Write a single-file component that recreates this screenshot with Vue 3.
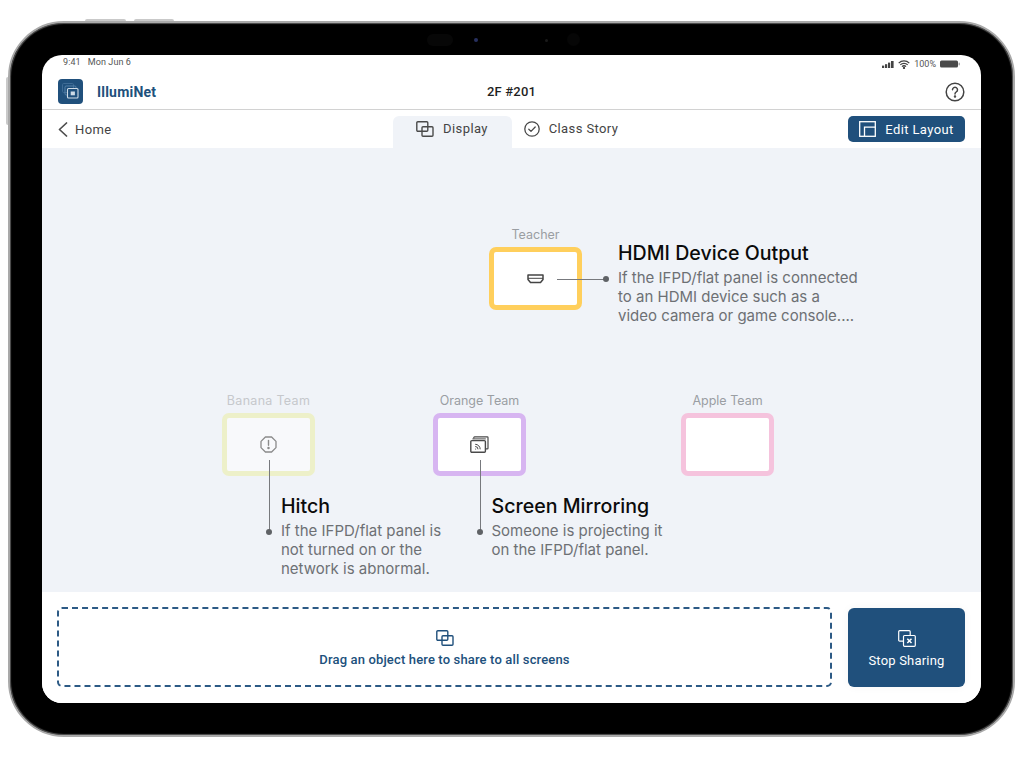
<script setup>
const tabs = [
  { id: 'display', label: 'Display', active: true },
  { id: 'story', label: 'Class Story', active: false },
]
</script>

<template>
  <div class="stage">
    <div class="device">
      <span class="hw hw-top-a"></span>
      <span class="hw hw-top-b"></span>
      <span class="hw hw-side"></span>
      <span class="cam cam-pill"></span>
      <span class="cam cam-lens"></span>
      <span class="cam cam-dot"></span>
      <span class="cam cam-round"></span>

      <div class="screen">
        <div class="status">
          <span class="status-time">9:41&nbsp;&nbsp;&nbsp;Mon Jun 6</span>
          <div class="status-right">
            <svg width="12" height="7" viewBox="0 0 12 7" fill="#444"><rect x="0" y="4.6" width="2.2" height="2.4"/><rect x="3" y="3.2" width="2.2" height="3.8"/><rect x="6" y="1.6" width="2.2" height="5.4"/><rect x="9" y="0" width="2.6" height="7"/></svg>
            <svg width="12" height="9" viewBox="0 0 12 9" fill="none" stroke="#444" stroke-width="1.3"><path d="M.7 3.1a7.6 7.6 0 0 1 10.600 0M2.300 4.900a5.300 5.300 0 0 1 7.400 0M4 6.600a2.800 2.800 0 0 1 4 0"/><circle cx="6" cy="8" r=".5" fill="#444"/></svg>
            <span class="status-pct">100%</span>
            <svg width="20" height="8" viewBox="0 0 20 8"><rect x="0" y=".5" width="18" height="7" rx="1.5" fill="#4a4a4a"/><rect x="18.6" y="2.7" width="1.2" height="2.6" fill="#9a9a9a"/></svg>
          </div>
        </div>

        <header class="topbar">
          <div class="brand">
            <div class="logo">
              <svg width="25" height="25" viewBox="0 0 25 25" fill="none">
                <rect x="4.5" y="4.5" width="11" height="9" rx="1.2" stroke="#3f6c96" stroke-width="1"/>
                <rect x="7" y="7" width="11" height="9" rx="1.2" stroke="#5580a8" stroke-width="1"/>
                <rect x="9.5" y="9.5" width="10.5" height="9.5" rx="1" fill="#20507c" stroke="#cfdbe6" stroke-width="1.1"/>
                <rect x="12.7" y="12.5" width="4.2" height="3.8" fill="#cfdbe6"/>
              </svg>
            </div>
            <span class="brand-name">IllumiNet</span>
          </div>
          <div class="room">2F #201</div>
          <div class="help">
            <svg width="20" height="20" viewBox="0 0 20 20" fill="none" stroke="#444" stroke-width="1.5"><circle cx="10" cy="10" r="8.800"/><path d="M7.500 7.700a2.500 2.500 0 1 1 3.800 2.200c-.9.500-1.300 1-1.300 2" stroke-linecap="round"/><circle cx="10" cy="14.400" r=".5" fill="#444"/></svg>
          </div>
        </header>

        <nav class="navbar">
          <div class="home">
            <svg width="10" height="15" viewBox="0 0 10 15" fill="none" stroke="#4d4d4d" stroke-width="1.7" stroke-linecap="round" stroke-linejoin="round"><path d="M8.500 1 1.500 7.500l7 6.500"/></svg>
            <span>Home</span>
          </div>
          <div class="tabs">
            <div v-for="t in tabs" :key="t.id" class="tab" :class="{ active: t.active }">
              <svg v-if="t.id === 'display'" width="18" height="16" viewBox="0 0 18 16" fill="none" stroke="#4a4a4a" stroke-width="1.4" stroke-linejoin="round"><rect x=".8" y=".8" width="11" height="9.400" rx="1"/><rect x="6" y="5.800" width="11" height="9.400" rx="1"/></svg>
              <svg v-else width="16" height="16" viewBox="0 0 16 16" fill="none" stroke="#4a4a4a" stroke-width="1.3" stroke-linecap="round" stroke-linejoin="round"><circle cx="8" cy="8" r="7.200"/><path d="m4.800 8.200 2.200 2.200 4.200-4.400"/></svg>
              <span>{{ t.label }}</span>
            </div>
          </div>
          <div class="nav-end">
            <button class="edit-btn" type="button">
              <svg width="17" height="16" viewBox="0 0 17 16" fill="none" stroke="#fff" stroke-width="1.3"><rect x=".7" y=".7" width="15.600" height="14.600"/><path d="M5.500 15V6.200h10.800"/></svg>
              <span>Edit Layout</span>
            </button>
          </div>
        </nav>

        <main class="canvas">
          <div class="node node-teacher">
            <div class="node-label">Teacher</div>
            <div class="node-box">
              <svg width="17" height="10" viewBox="0 0 17 10" fill="none" stroke="#444" stroke-width="1.5" stroke-linejoin="round"><path d="M1 1h15v4.500l-2.500 3h-10L1 5.500z"/><path d="M1 4.300h15" stroke-width="1"/></svg>
            </div>
          </div>
          <div class="node node-banana">
            <div class="node-label">Banana Team</div>
            <div class="node-box">
              <svg width="17" height="17" viewBox="0 0 17 17" fill="none" stroke="#8a8a8a" stroke-width="1.3"><path d="M5.400 1h6.200L16 5.400v6.200L11.600 16H5.400L1 11.600V5.400z" stroke-linejoin="round"/><path d="M8.500 4.500v4.800" stroke-linecap="round" stroke-width="1.400"/><circle cx="8.500" cy="12" r=".6" fill="#8a8a8a"/></svg>
            </div>
          </div>
          <div class="node node-orange">
            <div class="node-label">Orange Team</div>
            <div class="node-box">
              <svg width="19" height="17" viewBox="0 0 19 17" fill="none" stroke="#4a4a4a" stroke-width="1.200"><path d="M3.800 2.600V1.600c0-.4.300-.7.700-.7h12.800c.4 0 .7.300.7.700v10.600c0 .4-.3.700-.7.700h-1.300"/><rect x=".8" y="4.600" width="14.600" height="11.600" rx="1" fill="#fff" stroke-width="1.400"/><path d="M2.400 2.900h13.400" stroke-width="1"/><path d="M5.200 8.300a5 5 0 0 1 5 5M5.200 10.500a2.800 2.800 0 0 1 2.800 2.800" stroke-width="1"/><circle cx="5.600" cy="13" r=".6" fill="#4a4a4a" stroke="none"/></svg>
            </div>
          </div>
          <div class="node node-apple">
            <div class="node-label">Apple Team</div>
            <div class="node-box"></div>
          </div>

          <span class="line line-h"></span>
          <span class="line line-v line-hitch"></span>
          <span class="line line-v line-mirror"></span>
          <span class="dot dot-hdmi"></span>
          <span class="dot dot-hitch"></span>
          <span class="dot dot-mirror"></span>

          <section class="note note-hdmi">
            <h3>HDMI Device Output</h3>
            <p>If the IFPD/flat panel is connected<br>to an HDMI device such as a<br>video camera or game console....</p>
          </section>
          <section class="note note-hitch">
            <h3>Hitch</h3>
            <p>If the IFPD/flat panel is<br>not turned on or the<br>network is abnormal.</p>
          </section>
          <section class="note note-mirror">
            <h3>Screen Mirroring</h3>
            <p>Someone is projecting it<br>on the IFPD/flat panel.</p>
          </section>
        </main>

        <footer class="footer">
          <div class="dropzone">
            <svg width="18" height="16" viewBox="0 0 18 16" fill="none" stroke="#20507c" stroke-width="1.400" stroke-linejoin="round"><rect x=".8" y=".8" width="11" height="9.400" rx="1"/><rect x="6" y="5.800" width="11" height="9.400" rx="1"/></svg>
            <span>Drag an object here to share to all screens</span>
          </div>
          <button class="stop-btn" type="button">
            <svg width="18" height="17" viewBox="0 0 18 17" fill="none" stroke="#fff" stroke-width="1.200" stroke-linejoin="round"><rect x=".7" y=".7" width="11.500" height="10.500" rx="1"/><rect x="5.500" y="5.500" width="11.800" height="10.800" rx="1" fill="#20507c"/><path d="m9.300 8.700 4.200 4.400m0-4.400-4.200 4.400" stroke-width="1.500"/></svg>
            <span>Stop Sharing</span>
          </button>
        </footer>
      </div>
    </div>
  </div>
</template>

<style>
html, body { margin: 0; background: #fff; }
</style>

<style scoped>
.stage {
  width: 1024px;
  height: 759px;
  box-sizing: border-box;
  padding: 21px 9px 22px 8px;
  background: #fff;
  overflow: hidden;
  font-family: Roboto, "Liberation Sans", sans-serif;
}
.device {
  position: relative;
  height: 100%;
  box-sizing: border-box;
  padding: 32px;
  background: #000;
  border: 2px solid #a9a9a9;
  border-radius: 56px;
  box-shadow: inset 0 0 1px 1px #555;
}
.hw { position: absolute; background: #c9c9c9; }
.hw-top-a { top: -4px; left: 75px; width: 41px; height: 2px; border-radius: 2px 2px 0 0; }
.hw-top-b { top: -4px; left: 124px; width: 40px; height: 2px; border-radius: 2px 2px 0 0; }
.hw-side { top: 54px; left: -4px; width: 2px; height: 48px; border-radius: 2px 0 0 2px; }
.cam { position: absolute; border-radius: 50%; }
.cam-pill { top: 11px; left: 417px; width: 26px; height: 12px; border-radius: 6px; background: #070707; }
.cam-lens { top: 15px; left: 464px; width: 4px; height: 4px; background: #27305f; }
.cam-dot { top: 16px; left: 535px; width: 3px; height: 3px; background: #1a1a1a; }
.cam-round { top: 10px; left: 557px; width: 13px; height: 13px; background: #060606; }

.screen {
  height: 100%;
  display: flex;
  flex-direction: column;
  background: #fff;
  border-radius: 20px;
  overflow: hidden;
}

.status {
  height: 23px;
  flex: none;
  box-sizing: border-box;
  padding: 2px 21px 0;
  display: flex;
  justify-content: space-between;
  align-items: flex-start;
  font-size: 9px;
  line-height: 11px;
  color: #555;
}
.status-time { letter-spacing: .1px; }
.status-right { display: flex; align-items: center; gap: 4px; height: 12px; margin-top: 1px; }

.topbar {
  height: 32px;
  flex: none;
  box-sizing: border-box;
  padding: 0 16px 4px;
  border-bottom: 1px solid #d2d2d2;
  display: grid;
  grid-template-columns: 1fr auto 1fr;
  align-items: center;
}
.brand { display: flex; align-items: center; gap: 14px; }
.logo {
  width: 25px;
  height: 25px;
  border-radius: 4px;
  background: #20507c;
}
.logo svg { display: block; }
.brand-name { font-size: 14px; font-weight: 700; color: #20507c; letter-spacing: .2px; }
.room { font-size: 13px; font-weight: 500; color: #1f1f1f; letter-spacing: .2px; }
.help { justify-self: end; height: 20px; }
.help svg { display: block; }

.navbar {
  height: 38px;
  flex: none;
  box-sizing: border-box;
  padding: 0 16px;
  display: grid;
  grid-template-columns: 1fr auto 1fr;
  align-items: end;
}
.home {
  align-self: center;
  display: flex;
  align-items: center;
  gap: 7px;
  font-size: 13px;
  color: #444;
  letter-spacing: .4px;
}
.tabs { display: flex; }
.tab {
  width: 119px;
  height: 32px;
  box-sizing: border-box;
  padding-bottom: 7px;
  display: flex;
  align-items: center;
  justify-content: center;
  gap: 9px;
  font-size: 13px;
  color: #444;
  letter-spacing: .4px;
  border-radius: 6px 6px 0 0;
}
.tab.active { background: #f0f3f8; }
.nav-end { justify-self: end; align-self: start; padding-top: 6px; }
.edit-btn {
  width: 117px;
  height: 26px;
  border: 0;
  border-radius: 5px;
  background: #20507c;
  color: #fff;
  display: flex;
  align-items: center;
  justify-content: center;
  gap: 9px;
  font: 400 13px Roboto, "Liberation Sans", sans-serif;
  letter-spacing: .4px;
  padding: 0;
}

.canvas {
  position: relative;
  flex: 1;
  min-height: 0;
  background: #f0f3f8;
  font-family: Inter, "Liberation Sans", sans-serif;
}
.node { position: absolute; width: 93px; }
.node-label {
  height: 21px;
  margin-top: -1px;
  text-align: center;
  font-size: 12.500px;
  line-height: 17px;
  color: #9a9ea3;
  white-space: nowrap;
}
.node-box {
  height: 63px;
  box-sizing: border-box;
  border: 5px solid;
  border-radius: 7px;
  background: #fff;
  display: flex;
  align-items: center;
  justify-content: center;
}
.node-teacher { left: 447px; top: 79px; }
.node-teacher .node-box { border-color: #ffcf5c; }
.node-banana { left: 180px; top: 245px; }
.node-banana .node-label { color: #c6c8cc; letter-spacing: .3px; }
.node-banana .node-box { border-color: #edf0c9; background: #f8f9fb; }
.node-orange { left: 391px; top: 245px; }
.node-orange .node-box { border-color: #d7b5f1; }
.node-apple { left: 639px; top: 245px; }
.node-apple .node-box { border-color: #f5c3dd; }

.line { position: absolute; background: #77797d; }
.line-h { left: 515px; top: 131px; width: 50px; height: 1px; }
.line-v { top: 312px; width: 1px; height: 72px; }
.line-hitch { left: 227px; }
.line-mirror { left: 438px; }
.dot { position: absolute; width: 6px; height: 6px; border-radius: 50%; background: #5f6266; }
.dot-hdmi { left: 561px; top: 128px; }
.dot-hitch { left: 224px; top: 381px; }
.dot-mirror { left: 435px; top: 381px; }

.note { position: absolute; white-space: nowrap; }
.note h3 {
  margin: 0 0 3px;
  font-size: 19.600px;
  line-height: 24px;
  font-weight: 500;
  color: #0b0b0b;
}
.note p {
  margin: 0;
  font-size: 15px;
  line-height: 19px;
  color: #6d7074;
}
.note-hdmi { left: 576px; top: 93px; }
.note-hitch { left: 239px; top: 346px; }
.note-mirror { left: 449.500px; top: 346px; }

.footer {
  height: 111px;
  flex: none;
  box-sizing: border-box;
  padding: 15px 16px 16px 15px;
  display: flex;
  gap: 16px;
  background: #fff;
}
.dropzone {
  flex: 1;
  box-sizing: border-box;
  border: 2px dashed #2c5a85;
  border-radius: 5px;
  display: flex;
  flex-direction: column;
  align-items: center;
  justify-content: center;
  gap: 6px;
  padding-top: 3px;
  font-size: 13px;
  font-weight: 500;
  color: #20507c;
  letter-spacing: .15px;
}
.stop-btn {
  width: 117px;
  margin-top: 1px;
  border: 0;
  border-radius: 6px;
  background: #20507c;
  color: #fff;
  display: flex;
  flex-direction: column;
  align-items: center;
  justify-content: center;
  gap: 6px;
  padding: 3px 0 0;
  font: 400 13px Roboto, "Liberation Sans", sans-serif;
  letter-spacing: .2px;
  box-shadow: 0 0 10px rgba(0, 0, 0, .04);
}
</style>
